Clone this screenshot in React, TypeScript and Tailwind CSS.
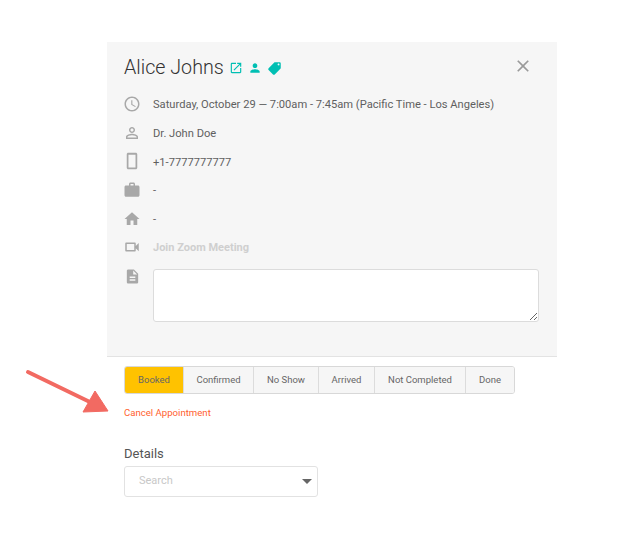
import React from 'react';

const ICONS = {
  launch: 'M19 19H5V5h7V3H5c-1.11 0-2 .9-2 2v14c0 1.1.89 2 2 2h14c1.1 0 2-.9 2-2v-7h-2v7zM14 3v2h3.59l-9.83 9.83 1.41 1.41L19 6.41V10h2V3h-7z',
  person: 'M12 12c2.21 0 4-1.79 4-4s-1.79-4-4-4-4 1.79-4 4 1.79 4 4 4zm0 2c-2.67 0-8 1.34-8 4v2h16v-2c0-2.66-5.33-4-8-4z',
  tag: 'M21.41 11.58l-9-9C12.05 2.22 11.55 2 11 2H4c-1.1 0-2 .9-2 2v7c0 .55.22 1.05.59 1.42l9 9c.36.36.86.58 1.41.58.55 0 1.05-.22 1.41-.59l7-7c.37-.36.59-.86.59-1.41 0-.55-.23-1.06-.59-1.42zM5.5 7C4.67 7 4 6.33 4 5.5S4.67 4 5.5 4 7 4.67 7 5.5 6.33 7 5.5 7z',
  clock: 'M11.99 2C6.47 2 2 6.48 2 12s4.47 10 9.99 10C17.52 22 22 17.52 22 12S17.52 2 11.99 2zM12 20c-4.42 0-8-3.58-8-8s3.58-8 8-8 8 3.58 8 8-3.58 8-8 8zm.5-13H11v6l5.25 3.15.75-1.23-4.5-2.67z',
  personOutline: 'M12 5.9c1.16 0 2.1.94 2.1 2.1s-.94 2.1-2.1 2.1S9.9 9.16 9.9 8s.94-2.1 2.1-2.1m0 9c2.97 0 6.1 1.46 6.1 2.1v1.1H5.9V17c0-.64 3.13-2.1 6.1-2.1M12 4C9.79 4 8 5.79 8 8s1.79 4 4 4 4-1.79 4-4-1.79-4-4-4zm0 9c-2.67 0-8 1.34-8 4v3h16v-3c0-2.66-5.33-4-8-4z',
  phone: 'M17 1H7C5.9 1 5 1.9 5 3v18c0 1.1.9 2 2 2h10c1.1 0 2-.9 2-2V3c0-1.1-.9-2-2-2zm-.3 19.5H7.3V3.5h9.4z',
  work: 'M20 6h-4V4c0-1.11-.89-2-2-2h-4c-1.11 0-2 .89-2 2v2H4c-1.11 0-1.99.89-1.99 2L2 19c0 1.11.89 2 2 2h16c1.11 0 2-.89 2-2V8c0-1.11-.89-2-2-2zm-6 0h-4V4h4v2z',
  home: 'M10 20v-6h4v6h5v-8h3L12 3 2 12h3v8z',
  video: 'M15 8v8H5V8h10m1-2H4c-.55 0-1 .45-1 1v10c0 .55.45 1 1 1h12c.55 0 1-.45 1-1v-3.5l4 4v-11l-4 4V7c0-.55-.45-1-1-1z',
  note: 'M14 2H6c-1.1 0-1.99.9-1.99 2L4 20c0 1.1.89 2 1.99 2H18c1.1 0 2-.9 2-2V8l-6-6zm2 16H8v-2h8v2zm0-4H8v-2h8v2zm-3-5V3.5L18.5 9H13z',
  close: 'M19 6.41L17.59 5 12 10.59 6.41 5 5 6.41 10.59 12 5 17.59 6.41 19 12 13.41 17.59 19 19 17.59 13.41 12z',
};

const Icon = ({ d, className }: { d: string; className: string }) => (
  <svg viewBox="0 0 24 24" fill="currentColor" className={className}>
    <path d={d} />
  </svg>
);

const rows = [
  { icon: ICONS.clock, text: 'Saturday, October 29 — 7:00am - 7:45am (Pacific Time - Los Angeles)' },
  { icon: ICONS.personOutline, text: 'Dr. John Doe' },
  { icon: ICONS.phone, text: '+1-7777777777' },
  { icon: ICONS.work, text: '-' },
  { icon: ICONS.home, text: '-' },
];

const statuses = ['Booked', 'Confirmed', 'No Show', 'Arrived', 'Not Completed', 'Done'];
const widths = ['w-[58px]', 'w-[70px]', 'w-[65px]', 'w-[56px]', 'w-[91px]', 'w-[49px]'];

export default function App() {
  return (
    <div className="relative w-[623px] h-[547px] bg-white pt-[42px] pl-[107px] font-['Roboto',sans-serif] overflow-hidden">
      <div className="w-[450px] h-[315px] bg-[#f6f6f6] border-b border-[#e3e3e3] pl-[17px] pr-[18px] pt-[12px]">
        <div className="flex items-center h-[26px]">
          <h1 className="text-[19.7px] leading-[26px] mt-[2px] font-light text-[#333]">Alice Johns</h1>
          <div className="flex items-center ml-[5px] mt-[2px] text-[#00bfb3]">
            <Icon d={ICONS.launch} className="w-[14px] h-[14px]" />
            <Icon d={ICONS.person} className="w-[14px] h-[14px] ml-[5px]" />
            <Icon d={ICONS.tag} className="w-[15px] h-[15px] ml-[5px] -scale-x-100" />
          </div>
          <Icon d={ICONS.close} className="w-[20px] h-[20px] ml-auto mr-[6px] -mt-[3px] text-[#9a9a9a]" />
        </div>
        <div className="mt-[11px] flex flex-col">
          {rows.map((r) => (
            <div key={r.icon} className="flex items-center h-[28.8px]">
              <div className="w-[29px] flex-none flex -mt-[3px]">
                <Icon d={r.icon} className="w-[18px] h-[18px] -ml-[1px] text-[#a8a8a8]" />
              </div>
              <span className="text-[11.15px] text-[#5f5f5f] whitespace-nowrap">{r.text}</span>
            </div>
          ))}
          <div className="flex items-center h-[28.8px] -mt-[1px]">
            <div className="w-[29px] flex-none flex -mt-[2px]">
              <Icon d={ICONS.video} className="w-[18px] h-[18px] -ml-[1px] text-[#a8a8a8]" />
            </div>
            <span className="text-[11px] font-bold text-[#cfcfcf]">Join Zoom Meeting</span>
          </div>
          <div className="flex mt-[6px]">
            <div className="w-[29px] flex-none flex">
              <Icon d={ICONS.note} className="w-[17px] h-[17px] -mt-[1px] text-[#a8a8a8]" />
            </div>
            <textarea className="block w-[386px] h-[53px] bg-white border border-[#dcdcdc] rounded-[3px] outline-none resize-y" />
          </div>
        </div>
      </div>

      <div className="pl-[17px] pt-[9px]">
        <div className="flex h-[28px] w-[391px] border border-[#d8d8d8] rounded-[3px] overflow-hidden">
          {statuses.map((s, i) => (
            <div
              key={s}
              className={`${widths[i]} flex items-center justify-center text-[9.5px] text-[#666] ${
                i === 0 ? 'bg-[#ffc200]' : 'bg-[#f6f6f6] border-l border-[#dcdcdc]'
              }`}
            >
              {s}
            </div>
          ))}
        </div>
        <div className="mt-[12px] text-[9.6px] leading-[13px] text-[#ff5f30]">Cancel Appointment</div>
        <div className="mt-[27px] text-[13px] leading-[16px] text-[#555]">Details</div>
        <div className="mt-[4px] w-[194px] h-[31px] bg-white border border-[#e2e2e2] rounded-[3px] flex items-center pl-[14px] pr-[5px]">
          <span className="text-[11px] text-[#c8c8c8]">Search</span>
          <div className="ml-auto w-0 h-0 border-l-[5px] border-r-[5px] border-t-[5px] border-l-transparent border-r-transparent border-t-[#666]" />
        </div>
      </div>

      <svg viewBox="0 0 110 70" className="absolute left-[20px] top-[362px] w-[110px] h-[70px]">
        <path d="M8 10 L74 42" stroke="#f26a62" strokeWidth="4" strokeLinecap="round" fill="none" />
        <path d="M63 50 L88 49 L75 29 Z" fill="#f26a62" stroke="#f26a62" strokeWidth="1" strokeLinejoin="round" />
      </svg>
    </div>
  );
}
